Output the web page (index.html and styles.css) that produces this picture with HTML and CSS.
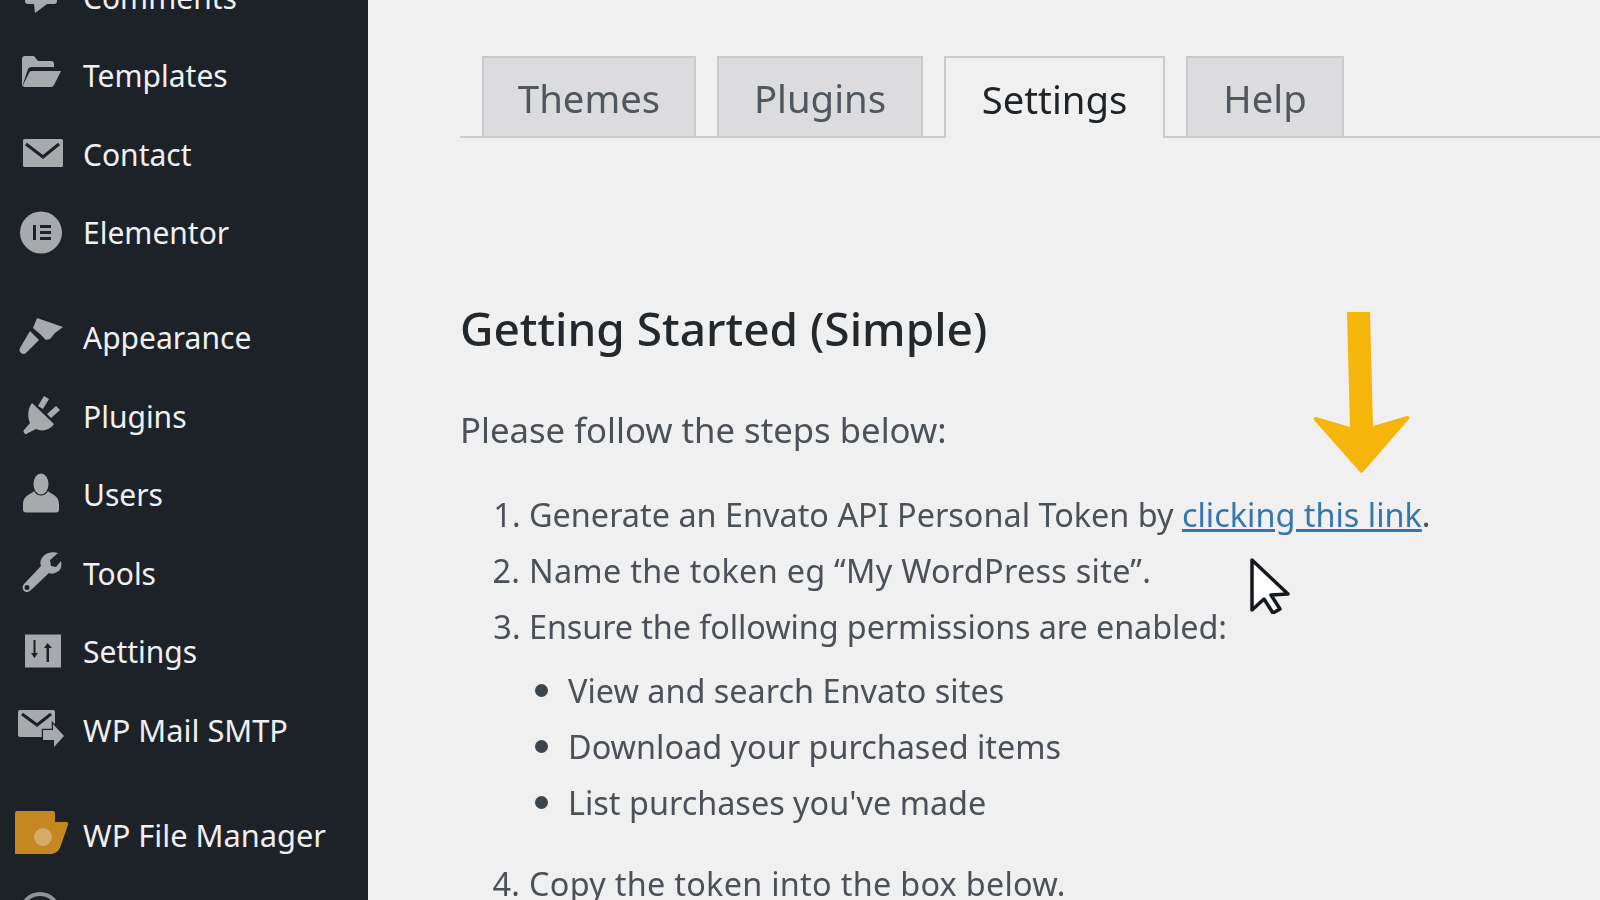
FILE: index.html
```html
<!DOCTYPE html>
<html lang="en">
<head>
  <meta charset="utf-8">
  <title>Envato Market Settings</title>
  <link rel="stylesheet" href="styles.css">
</head>
<body>
  <div class="sidebar">
    <ul class="menu">
      <li class="menu-item">
        <svg class="menu-icon" viewBox="0 0 83 78"><path d="M28 18h26a3 3 0 0 1 3 3v22a3 3 0 0 1-3 3h-7L35 55l-1-9h-6a3 3 0 0 1-3-3V21a3 3 0 0 1 3-3z"/></svg>
        <span>Comments</span>
      </li>
      <li class="menu-item">
        <svg class="menu-icon" viewBox="0 0 83 78"><path d="M22 50V22a3 3 0 0 1 3-3h9l4 5h13a3 3 0 0 1 3 3v3H32a4 4 0 0 0-4 2z"/><path d="M32 34h29l-7 14a4 4 0 0 1-3 2H24a2 2 0 0 1-1-2l6-12a3 3 0 0 1 3-2z"/></svg>
        <span>Templates</span>
      </li>
      <li class="menu-item">
        <svg class="menu-icon" viewBox="0 0 83 78"><rect x="23" y="24" width="40" height="28" rx="1.500"/><path class="icon-cut" d="M26 29l17 13 16-13"/></svg>
        <span>Contact</span>
      </li>
      <li class="menu-item">
        <svg class="menu-icon" viewBox="0 0 83 78"><path fill-rule="evenodd" d="M41 17.500a21 21 0 1 1 0 42 21 21 0 0 1 0-42zM33 31v15h3V31zm7 0v3h11v-3zm0 6v3h11v-3zm0 6v3h11v-3z"/></svg>
        <span>Elementor</span>
      </li>
      <li class="menu-sep"></li>
      <li class="menu-item">
        <svg class="menu-icon" viewBox="0 0 83 78"><path d="M37 19l26 9-8 6-5 6-4 1-6-6-7-6z"/><path d="M30 32l9 9-13 13a4 4 0 0 1-6-5z"/></svg>
        <span>Appearance</span>
      </li>
      <li class="menu-item">
        <svg class="menu-icon" viewBox="0 0 83 78"><path d="M44 19l5 3-6 10-5-3zM56 29l4 4-9 8-4-4z"/><path d="M32 26l22 21c-4 6-12 8-18 5l-8 4a2.500 2.500 0 0 1-4-3l6-7c-3-7-2-15 2-20z"/></svg>
        <span>Plugins</span>
      </li>
      <li class="menu-item">
        <svg class="menu-icon" viewBox="0 0 83 78"><ellipse cx="41" cy="28" rx="7.500" ry="10.500"/><path d="M34 35c3 6 11 6 14 0 2 3 11 4 11 13v6c0 1-1 2.500-3 2.500H26c-2 0-3-1.500-3-2.500v-6c0-9 9-10 11-13z"/></svg>
        <span>Users</span>
      </li>
      <li class="menu-item">
        <svg class="menu-icon" viewBox="0 0 83 78"><path fill-rule="evenodd" d="M58 19l-8 7 1 6 5 1 5-6c1 5 0 9-4 11-3 2-6 2-8 1L31 56c-2 2-5 3-7 1-2-2-2-5 0-7l17-18c-1-3-1-5 1-8 3-5 10-7 16-5zM27 51a2.500 2.500 0 1 0 0 5 2.500 2.500 0 0 0 0-5z"/></svg>
        <span>Tools</span>
      </li>
      <li class="menu-item">
        <svg class="menu-icon" viewBox="0 0 83 78"><path fill-rule="evenodd" d="M25 21.500h36v33H25zM33.500 27v13H31l3.500 5 3.500-5h-2.500V27zm14 3l-3.500 5h2.500v14h2.500V35H52z"/></svg>
        <span>Settings</span>
      </li>
      <li class="menu-item">
        <svg class="menu-icon" viewBox="0 0 83 78"><rect x="18" y="19" width="37" height="27" rx="2"/><path class="icon-cut" d="M22 23l15 11 14-11"/><path class="icon-arrow" d="M43 39h10v-6l11 12-10 11v-7H43z"/></svg>
        <span class="menu-wide">WP Mail SMTP</span>
      </li>
      <li class="menu-sep"></li>
      <li class="menu-item">
        <svg class="menu-icon" viewBox="0 0 83 78"><path class="icon-folder" d="M17 15h36a2 2 0 0 1 2 2v9h11a2 2 0 0 1 2 3l-7 20a12 12 0 0 1-9 9H15V17a2 2 0 0 1 2-2z"/><circle class="icon-folder-mark" cx="43" cy="41" r="9"/></svg>
        <span class="menu-wide">WP File Manager</span>
      </li>
      <li class="menu-item">
        <svg class="menu-icon" viewBox="0 0 83 78"><circle class="icon-ring" cx="40" cy="38" r="19"/></svg>
        <span>Loco Translate</span>
      </li>
    </ul>
  </div>

  <div class="content">
    <div class="tabs">
      <a class="tab tab-themes">Themes</a>
      <a class="tab tab-plugins">Plugins</a>
      <a class="tab tab-settings active">Settings</a>
      <a class="tab tab-help">Help</a>
    </div>

    <h2 class="title">Getting Started (Simple)</h2>
    <p class="intro">Please follow the steps below:</p>

    <ol class="steps">
      <li>Generate an Envato API Personal Token by <a class="link" href="#">clicking this link</a>.</li>
      <li class="step-loose">Name the token eg “My WordPress site”.</li>
      <li><span class="step-tight">Ensure the following permissions are enabled:</span>
        <ul class="perms">
          <li>View and search Envato sites</li>
          <li>Download your purchased items</li>
          <li>List purchases you've made</li>
        </ul>
      </li>
      <li class="step-loose">Copy the token into the box below.</li>
    </ol>

    <!-- arrow and cursor sit on top of the page, drawn in the video edit -->
    <svg class="arrow" viewBox="0 0 100 164"><path d="M34 0h23l3 114 34-10a2 2 0 0 1 2 3L50 160a2 2 0 0 1-3 0L1 108a2 2 0 0 1 2-3l34 10z"/></svg>
    <svg class="cursor" viewBox="0 0 40 56"><path d="M2 2v50l12-11 9 14 7-4-9-14 17-1z"/></svg>
  </div>
</body>
</html>
```

FILE: styles.css
```css
html,
body {
  margin: 0;
  padding: 0;
  height: 100%;
  overflow: hidden;
}
body {
  display: flex;
  background: #f0f0f1;
  font-family: "Noto Sans", "Open Sans", sans-serif;
  color: #4b5158;
  filter: blur(0.4px);
}
.sidebar {
  width: 368px;
  flex: none;
  height: 900px;
  overflow: hidden;
  background: #1d2229;
}
.menu {
  list-style: none;
  margin: -42px 0 0;
  padding: 0;
}
.menu-item {
  display: flex;
  align-items: center;
  height: 78.5px;
  color: #f0f0f1;
  font-size: 30px;
}
.menu-wide {
  font-size: 30.8px;
}
.menu-sep {
  height: 26.5px;
}
.menu-icon {
  width: 83px;
  height: 78px;
  flex: none;
  fill: #a7aaad;
}
.icon-cut {
  fill: none;
  stroke: #1d2229;
  stroke-width: 3;
}
.icon-arrow {
  stroke: #1d2229;
  stroke-width: 2.5;
  paint-order: stroke;
}
.icon-folder {
  fill: #c48722;
}
.icon-folder-mark {
  fill: #d4ab6a;
}
.icon-ring {
  fill: none;
  stroke: #8f9296;
  stroke-width: 4;
}
.content {
  position: relative;
  flex: 1;
  padding: 56px 0 0 92px;
}
.tabs {
  display: flex;
  height: 80px;
  padding-left: 22px;
  border-bottom: 2px solid #c9cacc;
}
.tab {
  box-sizing: border-box;
  display: flex;
  align-items: center;
  justify-content: center;
  height: 80px;
  margin-right: 21px;
  padding-top: 2px;
  background: #dcdcde;
  border: 2px solid #c9cacc;
  border-bottom: 0;
  color: #50575e;
  font-size: 38.300px;
}
.tab-themes { width: 214px; }
.tab-plugins { width: 206px; }
.tab-settings { width: 221px; }
.tab-help { width: 158px; }
.tab.active {
  height: 82px;
  background: #f0f0f1;
  color: #1d2327;
}
.title {
  margin: 161px 0 0;
  font-size: 46px;
  line-height: 58px;
  font-weight: 500;
  color: #23282d;
}
.intro {
  margin: 45px 0 0;
  font-size: 34.700px;
  line-height: 56px;
}
.steps {
  margin: 28px 0 0;
  padding-left: 69px;
  font-size: 32.400px;
  line-height: 56px;
}
.step-loose {
  letter-spacing: 0.28px;
}
.step-tight {
  letter-spacing: -0.1px;
}
.perms {
  margin: 8px 0 25px;
  padding-left: 39px;
  list-style: none;
}
.perms li {
  position: relative;
}
.perms li::before {
  content: "";
  position: absolute;
  left: -33px;
  top: 22px;
  width: 13px;
  height: 13px;
  border-radius: 50%;
  background: #3c434a;
}
.link {
  color: #3576ad;
}
.arrow {
  position: absolute;
  left: 945px;
  top: 312px;
  width: 100px;
  height: 164px;
  fill: #f5b50a;
}
.cursor {
  position: absolute;
  left: 882px;
  top: 558px;
  width: 40px;
  height: 56px;
  fill: #fff;
  stroke: #16191c;
  stroke-width: 3.500;
  stroke-linejoin: round;
}
```
